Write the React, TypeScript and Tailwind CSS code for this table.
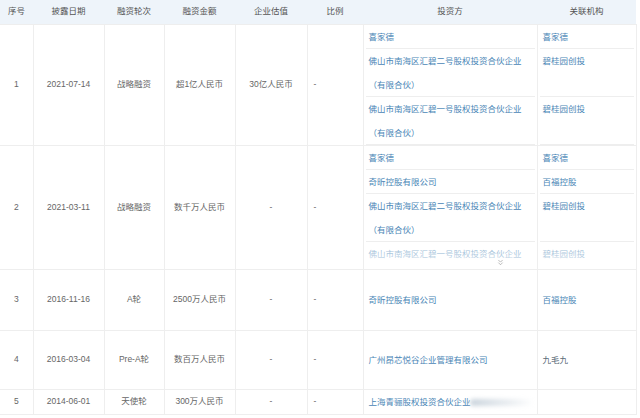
import { ChevronsDown } from "lucide-react";

interface Investor {
  name: string;
  extra?: string;
  org: string;
  orgLink?: boolean;
}

interface Round {
  no: number;
  date: string;
  round: string;
  amount: string;
  valuation: string;
  investors: Investor[];
  h: string;
  collapsed?: boolean;
}

const FJ2 = "佛山市南海区汇碧二号股权投资合伙企业";
const FJ1 = "佛山市南海区汇碧一号股权投资合伙企业";

const rounds: Round[] = [
  {
    no: 1,
    date: "2021-07-14",
    round: "战略融资",
    amount: "超1亿人民币",
    valuation: "30亿人民币",
    h: "h-[120px]",
    investors: [
      { name: "喜家德", org: "喜家德" },
      { name: FJ2, extra: "（有限合伙）", org: "碧桂园创投" },
      { name: FJ1, extra: "（有限合伙）", org: "碧桂园创投" },
    ],
  },
  {
    no: 2,
    date: "2021-03-11",
    round: "战略融资",
    amount: "数千万人民币",
    valuation: "-",
    h: "h-[123px]",
    collapsed: true,
    investors: [
      { name: "喜家德", org: "喜家德" },
      { name: "奇昕控股有限公司", org: "百福控股" },
      { name: FJ2, extra: "（有限合伙）", org: "碧桂园创投" },
      { name: FJ1, extra: "（有限合伙）", org: "碧桂园创投" },
    ],
  },
  {
    no: 3,
    date: "2016-11-16",
    round: "A轮",
    amount: "2500万人民币",
    valuation: "-",
    h: "h-[60px]",
    investors: [{ name: "奇昕控股有限公司", org: "百福控股" }],
  },
  {
    no: 4,
    date: "2016-03-04",
    round: "Pre-A轮",
    amount: "数百万人民币",
    valuation: "-",
    h: "h-[58px]",
    investors: [{ name: "广州昂芯悦谷企业管理有限公司", org: "九毛九", orgLink: false }],
  },
  {
    no: 5,
    date: "2014-06-01",
    round: "天使轮",
    amount: "300万人民币",
    valuation: "-",
    h: "h-[24px]",
    investors: [{ name: "上海青骊股权投资合伙企业", org: "" }],
  },
];

const td = "border border-[#eeeeee] p-0 align-middle";

function SubRows({ items, field }: { items: Investor[]; field: "name" | "org" }) {
  if (items.length === 1) {
    const it = items[0];
    const link = field === "name" || it.orgLink !== false;
    return (
      <div className={`px-[5px] leading-[24px] ${link ? "text-[#4a86b6]" : "text-[#5a6a78]"}`}>
        {field === "name" ? it.name : it.org}
      </div>
    );
  }
  return (
    <div className="flex flex-col">
      {items.map((it, i) => (
        <div
          key={i}
          className={`mx-[2px] shrink-0 border-b border-[#eeeeee] px-[3px] leading-[24px] text-[#4a86b6] ${
            it.extra ? "h-[48px]" : "h-[24px]"
          }`}
        >
          {field === "name" ? (
            <>
              <div>{it.name}</div>
              {it.extra && <div>{it.extra}</div>}
            </>
          ) : (
            it.org
          )}
        </div>
      ))}
    </div>
  );
}

function ListCell({ r, field }: { r: Round; field: "name" | "org" }) {
  return (
    <td className={`${td} relative`}>
      <div
        className={`${r.h} flex flex-col ${r.collapsed ? "justify-start overflow-hidden" : "justify-center"}`}
      >
        <SubRows items={r.investors} field={field} />
      </div>
      {r.collapsed && (
        <div className="absolute inset-x-0 bottom-0 h-[26px] bg-gradient-to-b from-white/30 via-white/60 to-white" />
      )}
      {r.collapsed && field === "name" && (
        <ChevronsDown
          className="absolute bottom-[2px] left-[132px] h-[9px] w-[9px] text-[#888]"
          strokeWidth={1.5}
        />
      )}
      {r.no === 5 && field === "name" && (
        <div className="absolute left-[106px] top-[9px] h-[7px] w-[64px] rounded-full bg-gradient-to-r from-[#c9d3dc] to-transparent blur-[2px]" />
      )}
    </td>
  );
}

export default function App() {
  const heads = ["序号", "披露日期", "融资轮次", "融资金额", "企业估值", "比例", "投资方", "关联机构"];
  const widths = ["w-[33px]", "w-[71px]", "w-[60px]", "w-[71px]", "w-[72px]", "w-[56px]", "w-[174px]", "w-[99px]"];

  return (
    <div
      className="h-[418px] w-[640px] overflow-hidden bg-white text-[8.5px] text-[#666]"
      style={{ fontFamily: '"Liberation Sans", "Noto Sans CJK SC", sans-serif' }}
    >
      <table className="w-[636px] table-fixed border-collapse">
        <colgroup>
          {widths.map((w, i) => (
            <col key={i} className={w} />
          ))}
        </colgroup>
        <thead>
          <tr className="h-[24px] bg-[#eef4fa]">
            {heads.map((h) => (
              <th key={h} className="p-0 text-center font-normal text-[#555]">
                {h}
              </th>
            ))}
          </tr>
        </thead>
        <tbody>
          {rounds.map((r) => (
            <tr key={r.no}>
              <td className={`${td} border-l-0 text-center`}>
                <div className={`flex items-center justify-center ${r.h}`}>{r.no}</div>
              </td>
              <td className={`${td} text-center`}>{r.date}</td>
              <td className={`${td} text-center`}>{r.round}</td>
              <td className={`${td} text-center`}>{r.amount}</td>
              <td className={`${td} text-center`}>{r.valuation}</td>
              <td className={`${td} pl-[6px]`}>-</td>
              <ListCell r={r} field="name" />
              <ListCell r={r} field="org" />
            </tr>
          ))}
        </tbody>
      </table>
    </div>
  );
}
